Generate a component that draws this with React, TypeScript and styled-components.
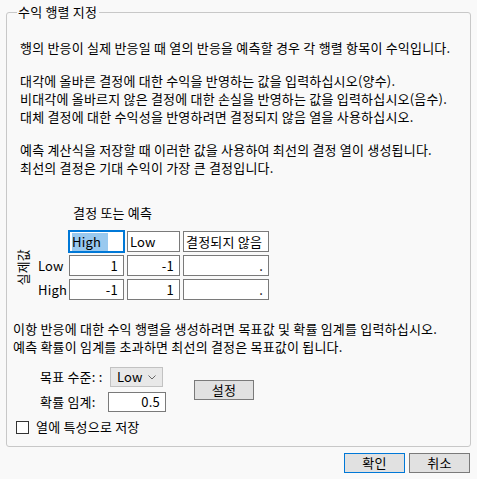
import { createGlobalStyle } from 'styled-components'
import styled from 'styled-components'

const GlobalStyle = createGlobalStyle`
  html, body {
    margin: 0;
    padding: 0;
    background: #f9f9f9;
  }
  body {
    font-family: "Noto Sans CJK KR", "Noto Sans", sans-serif;
    font-size: 13px;
    line-height: 18px;
    letter-spacing: 0.2px;
    color: #000;
  }
`

const Dialog = styled.div`
  width: 477px;
  height: 479px;
  box-sizing: border-box;
  padding: 3px 6px 0 6px;
  display: flex;
  flex-direction: column;
`

const Group = styled.fieldset`
  margin: 0;
  padding: 0 0 10px 6px;
  border: 1px solid #c8c8c8;
  border-radius: 3px;
  min-width: 0;
`

const Legend = styled.legend`
  margin-left: 4px;
  padding: 0 2px 0 1px;
  line-height: 18px;
`

const Para = styled.p<{ $indent?: number; $top: number }>`
  margin: ${(p) => p.$top}px 0 0 ${(p) => p.$indent ?? 0}px;
  white-space: nowrap;
`

const Matrix = styled.div`
  margin-top: 27px;
  margin-left: 3px;
  display: grid;
  grid-template-columns: 22px 31px 58px 56px 85px;
  grid-template-rows: 24px 21px 21px 21px;
  row-gap: 3px;
`

const MatrixTitle = styled.div`
  grid-column: 3 / -1;
  align-self: start;
  padding-left: 4px;
`

const SideLabel = styled.div`
  grid-column: 1;
  grid-row: 2 / 5;
  align-self: center;
  justify-self: start;
  writing-mode: vertical-rl;
  text-orientation: sideways;
  transform: rotate(180deg);
  line-height: 14px;
  margin-top: 4px;
`

const RowLabel = styled.div`
  grid-column: 2;
  align-self: center;
`

const Field = styled.div<{ $w: number; $right?: boolean; $focused?: boolean }>`
  width: ${(p) => p.$w}px;
  height: 21px;
  box-sizing: border-box;
  background: #fff;
  border: 1px solid ${(p) => (p.$focused ? '#0078d7' : '#7a7a7a')};
  box-shadow: ${(p) => (p.$focused ? '0 0 0 1px #0078d7' : 'none')};
  display: flex;
  align-items: center;
  justify-content: ${(p) => (p.$right ? 'flex-end' : 'flex-start')};
  padding: 0 ${(p) => (p.$right ? 5 : 1)}px 0 ${(p) => (p.$right ? 0 : 2)}px;
  white-space: nowrap;
  overflow: hidden;
`

const Selected = styled.span`
  background: #99c9ef;
  padding-right: 7px;
`

const Settings = styled.div`
  margin-top: 11px;
  margin-left: 27px;
  display: flex;
  align-items: center;
`

const SettingsGrid = styled.div`
  display: grid;
  grid-template-columns: 68px auto;
  row-gap: 5px;
  align-items: center;
`

const Select = styled.div`
  margin-left: 2px;
  width: 53px;
  height: 20px;
  box-sizing: border-box;
  border: 1px solid #c2c2c2;
  background: #e8e8e8;
  display: flex;
  align-items: center;
  justify-content: space-between;
  padding: 0 6px 0 6px;
`

const NumberInput = styled.div`
  width: 58px;
  height: 20px;
  box-sizing: border-box;
  border: 1px solid #7a7a7a;
  background: #fff;
  display: flex;
  align-items: center;
  justify-content: flex-end;
  padding-right: 5px;
`

const Button = styled.button<{ $primary?: boolean }>`
  width: 61px;
  height: 20px;
  box-sizing: border-box;
  margin: 0;
  padding: 0;
  border: 1px solid ${(p) => (p.$primary ? '#0078d7' : '#7a7a7a')};
  background: #e1e1e1;
  font-family: inherit;
  font-size: 13px;
  line-height: 16px;
  letter-spacing: inherit;
  color: #000;
`

const SetButton = styled(Button)`
  margin-left: 28px;
  width: 60px;
`

const CheckRow = styled.label`
  margin-top: 6px;
  margin-left: 3px;
  display: flex;
  align-items: center;
  gap: 7px;
`

const Box = styled.span`
  width: 13px;
  height: 13px;
  box-sizing: border-box;
  border: 1px solid #333;
  background: #fff;
`

const Footer = styled.div`
  margin-top: 6px;
  display: flex;
  justify-content: flex-end;
  gap: 4px;
  padding-right: 1px;
`

const Chevron = () => (
  <svg width="8" height="5" viewBox="0 0 8 5">
    <path d="M0.5 0.5 L4 4 L7.5 0.5" fill="none" stroke="#666" strokeWidth="1" />
  </svg>
)

const rows = [
  { label: 'Low', values: ['1', '-1'] },
  { label: 'High', values: ['-1', '1'] },
]

export default function App() {
  return (
    <>
      <GlobalStyle />
      <Dialog>
        <Group>
          <Legend>수익 행렬 지정</Legend>
          <Para $indent={7} $top={18}>
            행의 반응이 실제 반응일 때 열의 반응을 예측할 경우 각 행렬 항목이 수익입니다.
          </Para>
          <Para $indent={7} $top={15}>
            대각에 올바른 결정에 대한 수익을 반영하는 값을 입력하십시오(양수).
            <br />
            비대각에 올바르지 않은 결정에 대한 손실을 반영하는 값을 입력하십시오(음수).
            <br />
            대체 결정에 대한 수익성을 반영하려면 결정되지 않음 열을 사용하십시오.
          </Para>
          <Para $indent={7} $top={15}>
            예측 계산식을 저장할 때 이러한 값을 사용하여 최선의 결정 열이 생성됩니다.
            <br />
            최선의 결정은 기대 수익이 가장 큰 결정입니다.
          </Para>

          <Matrix>
            <MatrixTitle>결정 또는 예측</MatrixTitle>
            <SideLabel>실제값</SideLabel>
            <Field $w={55} $focused style={{ gridColumn: 3, gridRow: 2 }}>
              <Selected>High</Selected>
            </Field>
            <Field $w={53} style={{ gridColumn: 4, gridRow: 2 }}>
              Low
            </Field>
            <Field $w={86} style={{ gridColumn: 5, gridRow: 2 }}>
              결정되지 않음
            </Field>
            {rows.map((row, i) => [
              <RowLabel key={row.label} style={{ gridRow: i + 3 }}>
                {row.label}
              </RowLabel>,
              ...row.values.map((v, j) => (
                <Field key={row.label + j} $w={j === 0 ? 55 : 53} $right style={{ gridRow: i + 3 }}>
                  {v}
                </Field>
              )),
              <Field key={row.label + 'u'} $w={86} $right style={{ gridRow: i + 3 }}>
                .
              </Field>,
            ])}
          </Matrix>

          <Para $top={20}>
            이항 반응에 대한 수익 행렬을 생성하려면 목표값 및 확률 임계를 입력하십시오.
            <br />
            예측 확률이 임계를 초과하면 최선의 결정은 목표값이 됩니다.
          </Para>

          <Settings>
            <SettingsGrid>
              <span>목표 수준: :</span>
              <Select>
                <span>Low</span>
                <Chevron />
              </Select>
              <span>확률 임계:</span>
              <NumberInput>0.5</NumberInput>
            </SettingsGrid>
            <SetButton>설정</SetButton>
          </Settings>

          <CheckRow>
            <Box />
            <span>열에 특성으로 저장</span>
          </CheckRow>
        </Group>
        <Footer>
          <Button $primary>확인</Button>
          <Button>취소</Button>
        </Footer>
      </Dialog>
    </>
  )
}
